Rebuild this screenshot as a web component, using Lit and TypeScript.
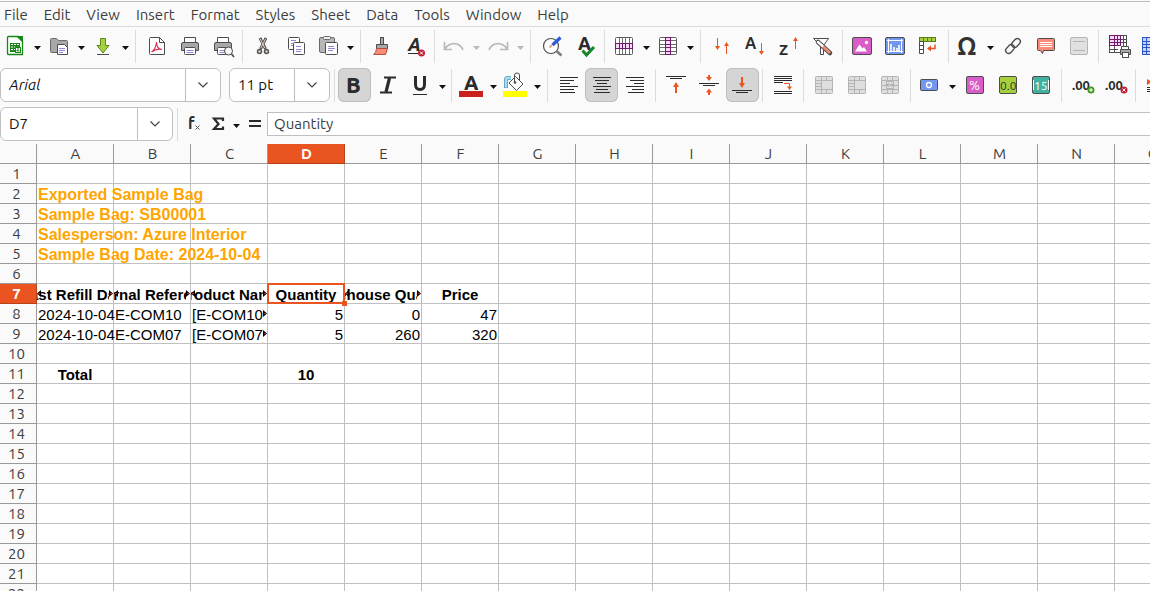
import { LitElement, html, svg, css, nothing, SVGTemplateResult } from "lit";
import { customElement } from "lit/decorators.js";
import { classMap } from "lit/directives/class-map.js";

type Item = {
  id?: string;
  label?: string;
  sep?: "narrow" | "wide";
  split?: boolean;
  active?: boolean;
  disabled?: boolean;
  roomy?: boolean;
};

type Cell = {
  text: string;
  align?: "center" | "right";
  kind?: "bold" | "title";
  clip?: "both" | "right";
};

const INK = "#4d4d4d";
const DARK = "#2b2b2b";
const ORANGE = "#e95420";

const lines = (list: number[][], stroke: string) =>
  list.map(([x1, y1, x2, y2]) => svg`<path d="M${x1} ${y1}L${x2} ${y2}" stroke=${stroke} fill="none"/>`);

const upArrow = (x: number, y: number, h: number) => svg`
  <path d="M${x + 0.5} ${y + 3}v${h - 3}" stroke=${ORANGE}/><path d="M${x - 2} ${y + 4}L${x + 0.5} ${y}L${x + 3} ${y + 4}z" fill=${ORANGE}/>`;
const downArrow = (x: number, y: number, h: number) => svg`
  <path d="M${x + 0.5} ${y}v${h - 3}" stroke=${ORANGE}/><path d="M${x - 2} ${y + h - 4}L${x + 0.5} ${y + h}L${x + 3} ${y + h - 4}z" fill=${ORANGE}/>`;

const tile = (fill: string, x: number, w: number) =>
  svg`<rect x=${x + 0.5} y="3.5" width=${w - 1} height="17" rx="1.5" fill=${fill} stroke=${INK}/>`;

const errorBadge = (x: number, y: number) => svg`
  <circle cx=${x} cy=${y} r="3.5" fill="#c01f36"/>
  <path d="M${x - 1.5} ${y - 1.5}l3 3m0-3l-3 3" stroke="#fff"/>`;

const printer = svg`
  <path d="M7.500 8.500V3.500h11v5" fill="#fff" stroke=${INK}/>
  <path d="M6 8.500h14a1.500 1.500 0 0 1 1.500 1.500v6.500h-17V10A1.500 1.500 0 0 1 6 8.500z" fill="#a8a8a8" stroke=${INK}/>
  <rect x="7.500" y="13.500" width="11" height="7" rx="1" fill="#fff" stroke=${INK}/>
  <path d="M9.500 16.500h7m-7 2h7" stroke="#8d8ad8"/>`;

const page = (x: number, y: number, w: number, h: number) => svg`
  <path d="M${x + 0.5} ${y + 0.5}h${w - 4}l3 3v${h - 4}h-${w - 1}z" fill="#fff" stroke=${INK} stroke-linejoin="round"/>`;

const textLines = (x: number, y: number) => svg`
  <path d="M${x} ${y}h5m-5 3h6m-6 2h5" stroke="#8d8ad8"/>`;

const mergeGrid = svg`
  <rect x="3.500" y="3.500" width="17" height="17" rx="1" fill="#dedede" stroke="#b4b4b4"/>
  <path d="M9.500 3.500v17M3.500 7.500h17M3.500 16.500h17M14.500 3.500v4M14.500 16.500v4M3.500 10.500h6M3.500 13.500h6" stroke="#b4b4b4" fill="none"/>`;

const icons: Record<string, SVGTemplateResult> = {
  new: svg`
    <path d="M5.500 2.500H15l4.500 4.500v13.500h-14a1 1 0 0 1-1-1v-16a1 1 0 0 1 1-1z" fill="#fff" stroke="#18871a" stroke-width="1.300"/>
    <path d="M13 2h7v7z" fill="#18871a"/>
    <rect x="7" y="9" width="10" height="9" fill="#18871a"/>
    <path d="M8 10.500h2m1 0h2m1 0h2M8 13h2m1 0h1M8 15.500h2m1 0h1" stroke="#fff"/>
    <rect x="12.500" y="13.500" width="5" height="5" fill="#fff" stroke="#18871a"/>
    <path d="M15 14v3m-1.500-1l1.500 1.500l1.500-1.500" stroke="#18871a" fill="none"/>`,
  open: svg`
    <path d="M3.500 5.500a1 1 0 0 1 1-1h5l2 2h8a1 1 0 0 1 1 1v11h-16a1 1 0 0 1-1-1z" fill="#a8a8a8" stroke="#6a6a6a"/>
    ${page(10, 10, 11, 11)}<path d="M12 14.500h6m-6 2h6m-6 2h4" stroke="#8d8ad8"/>`,
  save: svg`
    <path d="M9.500 4.500h5v7h3.500l-6 7.500l-6-7.500h3.500z" fill="#a5d13c" stroke="#5b8a1c" stroke-linejoin="round"/>
    <path d="M6 20.500h12" stroke=${INK}/>`,
  pdf: svg`
    <path d="M6.500 3.500h9l5 5v12h-14a1 1 0 0 1-1-1v-15a1 1 0 0 1 1-1z" fill="#fff" stroke=${INK}/>
    <path d="M15.500 3.500v5h5" fill="none" stroke=${INK}/>
    <path d="M7.500 18c2-1 5-5 5-10c0 4 2 7 5.500 7.500c-3-.8-7 0-10.500 2.500z" fill="none" stroke="#dc3350" stroke-width="1.200"/>`,
  print: printer,
  preview: svg`
    ${printer}
    <circle cx="18.500" cy="17" r="4" fill="#f6f6f6" stroke=${INK}/>
    <path d="M21.500 20l2.500 3" stroke=${INK} stroke-width="1.800"/>`,
  cut: svg`
    <path d="M10 4l5.500 11m.5-11l-5.500 11" stroke="#5a5550" stroke-width="2.800"/>
    <path d="M10.300 5l4.500 9m.7-9l-4.500 9" stroke="#d8d4cc" stroke-width="1"/>
    <circle cx="9.500" cy="17.500" r="2" fill="#d8d4cc" stroke="#5a5550" stroke-width="1.500"/>
    <circle cx="16.500" cy="17.500" r="2" fill="#d8d4cc" stroke="#5a5550" stroke-width="1.500"/>`,
  copy: svg`
    <rect x="5.500" y="3.500" width="11" height="12" rx="1" fill="#fff" stroke=${INK}/>${textLines(8, 6.5)}
    <rect x="10.500" y="8.500" width="11" height="12" rx="1" fill="#fff" stroke=${INK}/>${textLines(13, 12.5)}`,
  paste: svg`
    <rect x="3.500" y="3.500" width="15" height="15" rx="1.500" fill="#b6b6b6" stroke="#6a6a6a"/>
    <rect x="7.500" y="2.500" width="7" height="3" rx="1" fill="#eee" stroke="#6a6a6a"/>
    <rect x="9.500" y="8.500" width="12" height="12" rx="1" fill="#fff" stroke=${INK}/>
    <path d="M12 12.500h6m-6 2h7m-7 2h5" stroke="#8d8ad8"/>`,
  brush: svg`
    <rect x="11.500" y="3.500" width="3" height="7" fill="#a8a8a8" stroke=${INK}/>
    <path d="M7.500 10.500h11v4h-11z" fill="#a8a8a8" stroke=${INK}/>
    <path d="M7.500 14.500h11l-2 6h-12q3-2 3-6z" fill="#fb8b79" stroke="#b2503f"/>`,
  clear: svg`
    <text x="6" y="17" font-size="18" font-weight="800" font-style="italic" fill=${DARK}>A</text>
    <path d="M6 19.500h11" stroke=${DARK}/>${errorBadge(19.5, 19)}`,
  undo: svg`<path d="M2.500 8v7.500H10M3 15C7 8.500 17 7 21 16" fill="none" stroke="#b9b9b9" stroke-width="1.700"/>`,
  redo: svg`<path d="M21.500 8v7.500H14M21 15C17 8.500 7 7 3 16" fill="none" stroke="#b9b9b9" stroke-width="1.700"/>`,
  find: svg`
    <circle cx="12" cy="12" r="7.500" fill="#fff" stroke=${INK} stroke-width="1.200"/>
    <path d="M17.500 17l5 4.500" stroke="#7c7c7c" stroke-width="2.500"/>
    <path d="M10.500 13.500L13 11" stroke="#e8a07d" stroke-width="2"/><path d="M13.500 11l8-7.500" stroke="#2c5bd8" stroke-width="3.200"/>`,
  spell: svg`
    <text x="6" y="16" font-size="18" font-weight="800" fill=${DARK}>A</text>
    <path d="M10.500 16.500l4 4.500l7.500-8" fill="none" stroke="#17862a" stroke-width="3"/>`,
  row: svg`
    <rect x="3.500" y="3.500" width="17" height="17" rx="1" fill="#fff" stroke="#5c5c5c"/>
    <path d="M7.500 4v16M10.500 4v16M13.500 4v16M17.500 4v16" stroke="#6c6c6c"/>
    <rect x="3.500" y="9.500" width="17" height="5" fill="#f3d9f3" stroke="#74186e"/>
    <path d="M7.500 9v6M10.500 9v6M13.500 9v6M17.500 9v6" stroke="#74186e"/>`,
  col: svg`
    <rect x="3.500" y="3.500" width="17" height="17" rx="1" fill="#fff" stroke="#5c5c5c"/>
    <path d="M4 6.500h16M4 10.500h16M4 13.500h16M4 17.500h16" stroke="#6c6c6c"/>
    <rect x="9.500" y="3.500" width="5" height="17" fill="#f3d9f3" stroke="#74186e"/>
    <path d="M9 6.500h6M9 10.500h6M9 13.500h6M9 17.500h6" stroke="#74186e"/>`,
  sort: svg`${downArrow(8, 4, 12)}${upArrow(17, 8, 12)}`,
  asc: svg`<text x="3" y="15" font-size="16" font-weight="700" fill=${DARK}>A</text>${downArrow(19, 9, 12)}`,
  desc: svg`<text x="4" y="21" font-size="15" font-weight="700" fill=${DARK}>Z</text>${upArrow(20, 3, 12)}`,
  filter: svg`
    <path d="M5.500 4.500h15l-5 7v9h-3v-9z" fill="#fff" stroke=${INK}/>
    <path d="M10 8l12 11" stroke=${INK} stroke-width="4.500" stroke-linecap="round"/>
    <path d="M10 8l5 4.500" stroke="#fff" stroke-width="2.500" stroke-linecap="round"/>
    <path d="M15 12.500l7 6.500" stroke="#ee8b78" stroke-width="3"/>`,
  image: svg`
    ${tile("#d95cc8", 2, 20)}
    <path d="M5 17.500l4.500-7l3 4l1.500-1.500l3 4.500z" fill="#fff"/><circle cx="16.500" cy="8.500" r="1.700" fill="#fff"/>`,
  chart: svg`
    ${tile("#7397ee", 2, 20)}
    <path d="M4 6.500h16M4 17.500h16M5.500 5v14M18.500 5v14" stroke="#fff"/>
    <path d="M8 17v-7M11 17v-4M14 17v-3M16 17v-6" stroke="#fff" stroke-width="1.600"/>`,
  pivot: svg`
    <rect x="3.500" y="3.500" width="16" height="4" fill="#a5d13c" stroke="#5b7a1c"/>
    <path d="M7.500 3.500v4M11.500 3.500v4M15.500 3.500v4" stroke="#5b7a1c"/>
    <path d="M3.500 7.500h4v12h-4zM3.500 11.500h4M3.500 15.500h4" fill="#fff" stroke=${INK}/>
    <path d="M12 14.500h7v-4" fill="none" stroke=${ORANGE} stroke-width="1.500"/><path d="M11 14.500l4-3v6z" fill=${ORANGE}/>`,
  omega: svg`<text x="1" y="21" font-size="25" font-weight="600" fill="#333">Ω</text>`,
  link: svg`
    <g fill="none" stroke=${INK} stroke-width="1.300">
      <rect x="-5" y="-3" width="10" height="6" rx="3" transform="translate(16 9) rotate(-48)"/>
      <rect x="-5" y="-3" width="10" height="6" rx="3" transform="translate(10 15) rotate(-48)"/>
    </g>`,
  comment: svg`
    <path d="M5.500 4.500h15a1 1 0 0 1 1 1v10a1 1 0 0 1-1 1h-10l-1 3l-2-3h-2a1 1 0 0 1-1-1v-10a1 1 0 0 1 1-1z" fill="#fb8b79" stroke=${INK}/>
    <path d="M7 8.500h12m-12 2h12m-12 2h12" stroke="#fff"/>`,
  header: svg`
    <rect x="4.500" y="3.500" width="17" height="17" rx="1.500" fill="#e0e0e0" stroke="#b4b4b4"/>
    <path d="M7 7.500h12M7 16.500h12" stroke="#b4b4b4"/>`,
  printRange: svg`
    <rect x="3.500" y="1.500" width="17" height="17" fill="#fff" stroke=${INK}/>
    <rect x="3.500" y="1.500" width="11" height="10" fill="#f3d9f3" stroke="#74186e"/>
    <path d="M4 5.500h10.500M4 8.500h10.500M8.500 2v10M11.500 2v10" stroke="#74186e"/>
    <path d="M15 5.500h5M15 8.500h5M17.500 2v10M4 15.500h8M8.500 12v6" stroke=${INK}/>
    <path d="M15.500 12.500h7v3h-7z" fill="#fff" stroke=${INK}/>
    <path d="M14.500 15.500h10v5h-10z" fill="#a8a8a8" stroke=${INK}/><rect x="16.500" y="18.500" width="6" height="5" fill="#fff" stroke=${INK}/>`,
  freeze: svg`
    <rect x="3.500" y="3.500" width="17" height="17" fill="#c4d4fa" stroke="#2c56c8"/>
    <path d="M4 7.500h16M4 10.500h16M4 13.500h16M4 17.500h16M7.500 4v16M12.500 4v16" stroke="#2c56c8"/>`,
  bold: svg`<text x="4" y="20" font-size="22" font-weight="800" fill=${DARK}>B</text>`,
  italic: svg`<path d="M9 4.500h12M5 19.500h12" stroke=${DARK} stroke-width="2" fill="none"/><path d="M14.500 5l-3.500 14" stroke=${DARK} stroke-width="3.200"/>`,
  underline: svg`<path d="M7.500 3v8.500q0 5 4.500 5t4.500-5V3" fill="none" stroke=${DARK} stroke-width="3"/><path d="M5 21.500h14" stroke=${DARK}/>`,
  fontColor: svg`<text x="5" y="17" font-size="20" font-weight="800" fill=${DARK}>A</text><rect y="18" width="24" height="6" fill="#c9211e"/>`,
  highlight: svg`
    <path d="M8 5H4.500q-1.500 0-1.500 2v8" fill="none" stroke="#5d9cb8" stroke-width="4"/><path d="M8 5H4.500q-1.500 0-1.500 2v7.500" fill="none" stroke="#a4dcf0" stroke-width="2.400"/>
    <path d="M12.500 3.500l7.500 7.500l-6.500 6.500L6 10z" fill="#fff" stroke=${INK}/>
    <path d="M11.500 9V2a2.500 2 0 0 1 5 0v6" fill="none" stroke=${INK}/><circle cx="12" cy="9.500" r="1.300" fill=${INK}/>
    <rect y="18" width="24" height="6" fill="#ff0"/>`,
  left: svg`${lines([[4, 4.5, 22, 4.5], [4, 7.5, 18, 7.5], [4, 10.5, 14, 10.5], [4, 13.5, 22, 13.5], [4, 16.5, 18, 16.5], [4, 19.5, 19, 19.5]], DARK)}`,
  center: svg`${lines([[4, 4.5, 22, 4.5], [6, 7.5, 20, 7.5], [8, 10.5, 18, 10.5], [4, 13.5, 22, 13.5], [7, 16.5, 19, 16.5], [5, 19.5, 21, 19.5]], DARK)}`,
  right: svg`${lines([[4, 4.5, 22, 4.5], [8, 7.5, 22, 7.5], [12, 10.5, 22, 10.5], [4, 13.5, 22, 13.5], [10, 16.5, 22, 16.5], [6, 19.5, 22, 19.5]], DARK)}`,
  top: svg`${lines([[2, 3.5, 22, 3.5], [6, 5.5, 18, 5.5]], DARK)}<path d="M12 12v8" stroke=${ORANGE} stroke-width="2"/><path d="M9 14l3-5l3 5z" fill=${ORANGE}/>`,
  middle: svg`${lines([[2, 10.5, 22, 10.5], [6, 12.5, 18, 12.5]], DARK)}
    <path d="M12 2v3M12 19v3" stroke=${ORANGE} stroke-width="2"/><path d="M9 4h6l-3 4zM9 19.500h6l-3-4z" fill=${ORANGE}/>`,
  bottom: svg`${lines([[2, 17.5, 22, 17.5], [6, 19.5, 18, 19.5]], DARK)}<path d="M12 4v8" stroke=${ORANGE} stroke-width="2"/><path d="M9 10l3 5l3-5z" fill=${ORANGE}/>`,
  wrap: svg`${lines([[4, 3.5, 22, 3.5], [4, 5.5, 22, 5.5], [4, 7.5, 22, 7.5], [4, 9.5, 13, 9.5], [4, 18.5, 22, 18.5], [4, 20.5, 22, 20.5]], DARK)}
    <path d="M14 10.500h5.500v4" fill="none" stroke=${ORANGE}/><path d="M17 13.500h5l-2.500 3.500z" fill=${ORANGE}/>`,
  merge: mergeGrid,
  unmerge: mergeGrid,
  mergeCenter: svg`
    <rect x="3.500" y="3.500" width="17" height="17" rx="1" fill="#dedede" stroke="#b4b4b4"/>
    <path d="M9.500 4v16M14.500 4v16M4 7.500h16M4 16.500h16M4 12.500h4M16 12.500h4" stroke="#b4b4b4"/>
    <path d="M8.500 8.500h7v7h-7z" fill="#dedede" stroke="#b4b4b4"/><path d="M9 12h6M10.500 10.500L9 12l1.500 1.500M13.500 10.500L15 12l-1.500 1.500" stroke="#a4a4a4" fill="none"/>`,
  currency: svg`<rect x="2.500" y="6.500" width="17" height="11" rx="1" fill="#7397ee" stroke=${INK}/><circle cx="11" cy="12" r="2.500" fill="none" stroke="#fff" stroke-width="1.300"/>`,
  percent: svg`${tile("#d95cc8", 4, 18)}<text x="7" y="17" font-size="13" fill="#fff">%</text>`,
  number: svg`${tile("#a5d13c", 4, 18)}<text x="5" y="17" font-size="12" fill="#333">0.0</text>`,
  date: svg`${tile("#43b0a0", 4, 18)}<path d="M5.500 7v10M20.500 7v10" stroke="#fff"/><text x="6" y="17" font-size="12" fill="#fff">15</text>`,
  addDecimal: svg`<text x="2" y="17" font-size="13" font-weight="600" fill=${DARK}>.00</text><circle cx="21" cy="17" r="3.500" fill="#3f9b1f"/><path d="M19 17h4M21 15v4" stroke="#fff"/>`,
  delDecimal: svg`<text x="2" y="17" font-size="13" font-weight="600" fill=${DARK}>.00</text>${errorBadge(21, 17)}`,
  indent: svg`<path d="M4 6l5 3l-5 3z" fill=${ORANGE}/><path d="M8 8.500h12" stroke=${ORANGE}/>${lines([[4, 14.5, 22, 14.5], [4, 16.5, 22, 16.5], [4, 18.5, 22, 18.5]], DARK)}`,
};

const standardBar: Item[] = [
  { id: "new", label: "New", split: true },
  { id: "open", label: "Open", split: true },
  { id: "save", label: "Save", split: true },
  { sep: "wide" },
  { id: "pdf", label: "Export as PDF" },
  { id: "print", label: "Print" },
  { id: "preview", label: "Print Preview" },
  { sep: "narrow" },
  { id: "cut", label: "Cut" },
  { id: "copy", label: "Copy" },
  { id: "paste", label: "Paste", split: true },
  { sep: "wide" },
  { id: "brush", label: "Clone Formatting" },
  { id: "clear", label: "Clear Formatting" },
  { sep: "narrow" },
  { id: "undo", label: "Undo", split: true, disabled: true },
  { id: "redo", label: "Redo", split: true, disabled: true },
  { sep: "wide" },
  { id: "find", label: "Find and Replace" },
  { id: "spell", label: "Spelling" },
  { sep: "narrow" },
  { id: "row", label: "Row", split: true },
  { id: "col", label: "Column", split: true },
  { sep: "wide" },
  { id: "sort", label: "Sort" },
  { id: "asc", label: "Sort Ascending" },
  { id: "desc", label: "Sort Descending" },
  { id: "filter", label: "AutoFilter", roomy: true },
  { sep: "narrow" },
  { id: "image", label: "Insert Image" },
  { id: "chart", label: "Insert Chart" },
  { id: "pivot", label: "Insert Pivot Table" },
  { sep: "narrow" },
  { id: "omega", label: "Special Character", split: true },
  { id: "link", label: "Insert Hyperlink" },
  { id: "comment", label: "Insert Comment" },
  { id: "header", label: "Headers and Footers", disabled: true },
  { sep: "narrow" },
  { id: "printRange", label: "Define Print Area" },
  { id: "freeze", label: "Freeze Rows and Columns", split: true },
];

const formatBar: Item[] = [
  { sep: "narrow" },
  { id: "bold", label: "Bold", active: true },
  { id: "italic", label: "Italic" },
  { id: "underline", label: "Underline", split: true },
  { sep: "narrow" },
  { id: "fontColor", label: "Font Color", split: true },
  { id: "highlight", label: "Background Color", split: true },
  { sep: "wide" },
  { id: "left", label: "Align Left" },
  { id: "center", label: "Center Horizontally", active: true },
  { id: "right", label: "Align Right" },
  { sep: "wide" },
  { id: "top", label: "Align Top" },
  { id: "middle", label: "Center Vertically" },
  { id: "bottom", label: "Align Bottom", active: true },
  { sep: "narrow" },
  { id: "wrap", label: "Wrap Text" },
  { sep: "wide" },
  { id: "merge", label: "Merge and Center Cells", disabled: true },
  { id: "unmerge", label: "Merge Cells", disabled: true },
  { id: "mergeCenter", label: "Unmerge Cells", disabled: true },
  { sep: "narrow" },
  { id: "currency", label: "Format as Currency", split: true },
  { id: "percent", label: "Format as Percent" },
  { id: "number", label: "Format as Number" },
  { id: "date", label: "Format as Date" },
  { sep: "wide" },
  { id: "addDecimal", label: "Add Decimal Place" },
  { id: "delDecimal", label: "Delete Decimal Place" },
  { sep: "narrow" },
  { id: "indent", label: "Increase Indent" },
];

const menus = ["File", "Edit", "View", "Insert", "Format", "Styles", "Sheet", "Data", "Tools", "Window", "Help"];
const columns = "ABCDEFGHIJKLMNO".split("");
const rowNumbers = Array.from({ length: 22 }, (_, i) => i + 1);

const cells: Record<string, Cell> = {
  A2: { text: "Exported Sample Bag", kind: "title" },
  A3: { text: "Sample Bag: SB00001", kind: "title" },
  A4: { text: "Salesperson: Azure Interior", kind: "title" },
  A5: { text: "Sample Bag Date: 2024-10-04", kind: "title" },
  A7: { text: "Last Refill Date", kind: "bold", align: "center", clip: "both" },
  B7: { text: "Internal Reference", kind: "bold", align: "center", clip: "both" },
  C7: { text: "Product Name", kind: "bold", align: "center", clip: "both" },
  D7: { text: "Quantity", kind: "bold", align: "center" },
  E7: { text: "Warehouse Quantity", kind: "bold", align: "center", clip: "both" },
  F7: { text: "Price", kind: "bold", align: "center" },
  A8: { text: "2024-10-04" },
  B8: { text: "E-COM10" },
  C8: { text: "[E-COM10]", clip: "right" },
  D8: { text: "5", align: "right" },
  E8: { text: "0", align: "right" },
  F8: { text: "47", align: "right" },
  A9: { text: "2024-10-04" },
  B9: { text: "E-COM07" },
  C9: { text: "[E-COM07]", clip: "right" },
  D9: { text: "5", align: "right" },
  E9: { text: "260", align: "right" },
  F9: { text: "320", align: "right" },
  A11: { text: "Total", kind: "bold", align: "center" },
  D11: { text: "10", kind: "bold", align: "center" },
};

@customElement("app-root")
export class AppRoot extends LitElement {
  static styles = css`
    :host {
      display: flex;
      flex-direction: column;
      height: 100vh;
      overflow: hidden;
      background: #fafafa;
      color: #3d3d3d;
      font: 15px/20px Ubuntu, "Noto Sans", sans-serif;
    }
    * { box-sizing: border-box; }
    button, input { font: inherit; color: inherit; margin: 0; padding: 0; border: 0; background: none; }
    button { display: flex; align-items: center; flex: none; }
    svg { display: block; flex: none; overflow: visible; }
    .menus {
      flex: none;
      display: flex;
      gap: 16px;
      margin-top: 1px;
      padding: 3px 4px 1px;
      height: 26px;
      border-top: 1px solid #bdbdbd;
      border-bottom: 1px solid #dcdcdc;
    }
    .bar { flex: none; display: flex; align-items: center; height: 38px; overflow: hidden; }
    .standard { margin-left: -1px; }
    .format { height: 40px; }
    .formula { height: 39px; padding-bottom: 1px; }
    .sep { flex: none; width: 1px; height: 33px; background: #dcdcdc; margin: 0 3px; }
    .sep.wide { margin: 0 4px; }
    .tool { width: 33px; height: 34px; padding-left: 4px; border-radius: 6px; }
    .tool.roomy { width: 35px; }
    .tool.active { background: #d5d5d5; box-shadow: inset 0 0 0 1px #bebebe; }
    .drop { width: 11px; height: 34px; justify-content: center; padding-top: 3px; color: #111; }
    .drop:disabled { color: #b9b9b9; }
    .combo {
      flex: none;
      display: flex;
      height: 34px;
      border: 1px solid #c0c0c0;
      border-radius: 6px;
      background: #fff;
      color: #111;
      overflow: hidden;
    }
    .combo input { flex: 1; min-width: 0; padding-left: 8px; }
    .combo button { width: 35px; justify-content: center; border-left: 1px solid #c0c0c0; color: #444; }
    .font { width: 221px; font-style: italic; margin-right: 8px; }
    .size { width: 101px; margin-right: 1px; }
    .name { width: 173px; margin-right: 1px; }
    .fn { justify-content: center; width: 25px; height: 34px; }
    .entry {
      flex: 1;
      min-width: 0;
      height: 24px;
      padding: 0 6px 2px;
      border: 1px solid #c0c0c0;
      border-right: 0;
      background: #fff;
    }
    .sheet { flex: 1; min-height: 0; overflow: hidden; background: #fff; }
    table { table-layout: fixed; border-collapse: separate; border-spacing: 0; width: 1px; }
    th, td { padding: 0; height: 20px; }
    th {
      width: 77px;
      padding: 1px 0 0 1px;
      background: #fafafa;
      border: solid #999;
      border-width: 0 1px 1px 0;
      font-weight: 400;
      line-height: 18px;
      text-align: center;
    }
    th.edge { width: 37px; padding-right: 4px; }
    th.chosen { background: #e95420; color: #fff; font-weight: 700; border-color: #b8431a; }
    td {
      border: solid #c0c0c0;
      border-width: 0 1px 1px 0;
      font: 15px/21px Arial, "Liberation Sans", sans-serif;
      color: #000;
      white-space: nowrap;
    }
    .cell { display: flex; height: 19px; padding: 0 1px; }
    .cell.center { justify-content: center; }
    .cell.right { justify-content: flex-end; }
    .cell.bold { font-weight: 700; }
    .cell.title { font-size: 16px; font-weight: 700; color: #ffa500; }
    .cell.clip { position: relative; overflow: hidden; }
    .more { position: absolute; right: 0; top: 0; background: #fff; }
    .more.back { right: auto; left: 0; background: none; }
    .cursor { position: relative; }
    .cursor::before { content: ""; position: absolute; inset: -1px; border: 2px solid #e95420; }
    .cursor::after {
      content: "";
      position: absolute;
      right: -3px;
      bottom: -3px;
      width: 5px;
      height: 5px;
      background: #e95420;
    }
  `;

  private chevron() {
    return html`<svg width="12" height="8" viewBox="0 0 12 8" fill="none" stroke="currentColor"><path d="M1.500 1.500L6 6l4.500-4.500" stroke-width="1.200" /></svg>`;
  }

  private triangle() {
    return html`<svg width="7" height="4" viewBox="0 0 7 4"><path d="M0 0h7L3.500 4z" fill="currentColor" /></svg>`;
  }

  private tool(item: Item) {
    if (item.sep) return html`<span class="sep ${item.sep}"></span>`;
    const cls = { tool: true, active: !!item.active, roomy: !!item.roomy };
    return html`<button class=${classMap(cls)} aria-label=${item.label!} ?disabled=${item.disabled}>
        <svg width="24" height="24" viewBox="0 0 24 24">${icons[item.id!]}</svg></button
      >${item.split
        ? html`<button class="drop" aria-label="${item.label} options" ?disabled=${item.disabled}>${this.triangle()}</button>`
        : nothing}`;
  }

  private combo(kind: string, label: string, value: string) {
    return html`<div class="combo ${kind}">
      <input aria-label=${label} .value=${value} />
      <button aria-label="${label} list">${this.chevron()}</button>
    </div>`;
  }

  private marker(back: boolean) {
    return html`<svg class=${classMap({ more: true, back })} width="4" height="19" viewBox="0 0 4 19">
      <path d=${back ? "M4 6v7L0 9.500z" : "M0 6v7L4 9.500z"} fill="#000" /><path d="M1 9.500h2" stroke="#c9211e" />
    </svg>`;
  }

  private cell(ref: string) {
    const c = cells[ref];
    if (!c) return html`<td></td>`;
    const cls = { cell: true, [c.align ?? "start"]: true, [c.kind ?? "plain"]: true, clip: !!c.clip };
    return html`<td class=${ref === "D7" ? "cursor" : nothing}>
      <div class=${classMap(cls)}>
        <span>${c.text}</span>${c.clip === "both" ? this.marker(true) : nothing}${c.clip ? this.marker(false) : nothing}
      </div>
    </td>`;
  }

  render() {
    return html`
      <nav class="menus">${menus.map((m) => html`<button>${m}</button>`)}</nav>
      <div class="bar standard">${standardBar.map((i) => this.tool(i))}</div>
      <div class="bar format">
        ${this.combo("font", "Font Name", "Arial")}${this.combo("size", "Font Size", "11 pt")}${formatBar.map((i) => this.tool(i))}
      </div>
      <div class="bar formula">
        ${this.combo("name", "Name Box", "D7")}
        <span class="sep"></span>
        <button class="fn" aria-label="Function Wizard">
          <svg width="14" height="16" viewBox="0 0 14 16" fill=${DARK}>
            <text x="1" y="13" font-size="16" font-weight="700">f</text><path d="M8.500 9.500l4 4m0-4l-4 4" stroke=${INK} />
          </svg>
        </button>
        <button class="fn" aria-label="Select Function">
          <svg width="12" height="14" viewBox="0 0 12 14"><path d="M10 4V1.500H1L5.500 7L1 12H10V9.500" fill="none" stroke=${DARK} stroke-width="2.200" /></svg>
        </button>
        <button class="drop" aria-label="Function list">${this.triangle()}</button>
        <button class="fn" aria-label="Formula">
          <svg width="12" height="8" viewBox="0 0 12 8"><path d="M0 1h12M0 6h12" stroke=${DARK} stroke-width="2" /></svg>
        </button>
        <input class="entry" aria-label="Input line" .value=${"Quantity"} />
      </div>
      <div class="sheet">
        <table>
          <thead>
            <tr>
              <th class="edge"></th>
              ${columns.map((c) => html`<th scope="col" class=${c === "D" ? "chosen" : nothing}>${c}</th>`)}
            </tr>
          </thead>
          <tbody>
            ${rowNumbers.map(
              (r) => html`<tr>
                <th scope="row" class="edge ${r === 7 ? "chosen" : ""}">${r}</th>
                ${columns.map((c) => this.cell(c + r))}
              </tr>`
            )}
          </tbody>
        </table>
      </div>
    `;
  }
}
